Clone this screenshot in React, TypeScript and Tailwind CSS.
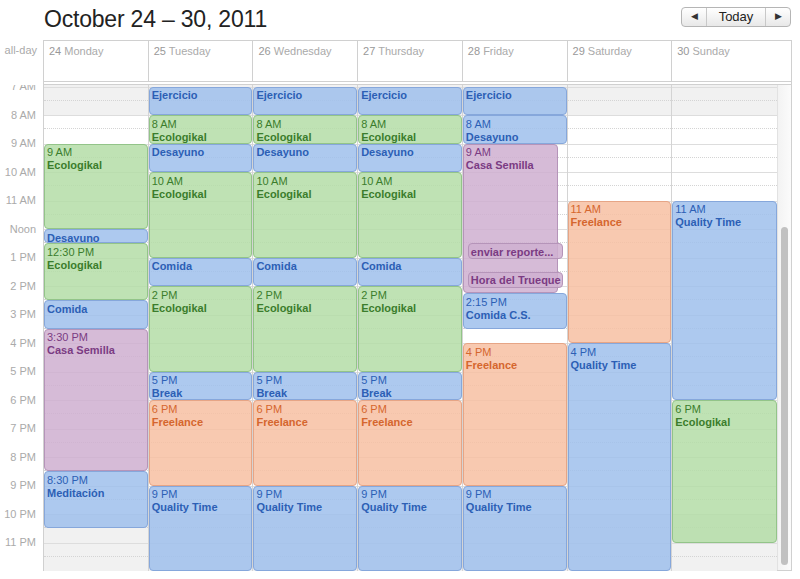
type Color = "blue" | "green" | "purple" | "orange";

type Ev = {
  s: number;
  e: number;
  c: Color;
  time?: string;
  title: string;
  pos?: string;
  h?: number;
};

const H = 28.5;
const OFFSET = 1.5;

const palette: Record<Color, string> = {
  blue: "bg-[rgba(160,192,236,0.86)] border-[#86a7db] text-[#2c5fb5]",
  green: "bg-[rgba(180,221,168,0.86)] border-[#93c489] text-[#3b7d2c]",
  purple: "bg-[rgba(207,176,208,0.86)] border-[#b594b9] text-[#7b3b83]",
  orange: "bg-[rgba(247,192,163,0.86)] border-[#e6a586] text-[#d5662e]",
};

const midWeek: Ev[] = [
  { s: 7, e: 8, c: "blue", title: "Ejercicio" },
  { s: 8, e: 9, c: "green", time: "8 AM", title: "Ecologikal" },
  { s: 9, e: 10, c: "blue", title: "Desayuno" },
  { s: 10, e: 13, c: "green", time: "10 AM", title: "Ecologikal" },
  { s: 13, e: 14, c: "blue", title: "Comida" },
  { s: 14, e: 17, c: "green", time: "2 PM", title: "Ecologikal" },
  { s: 17, e: 18, c: "blue", time: "5 PM", title: "Break" },
  { s: 18, e: 21, c: "orange", time: "6 PM", title: "Freelance" },
  { s: 21, e: 24, c: "blue", time: "9 PM", title: "Quality Time" },
];

const days: { num: string; name: string; events: Ev[] }[] = [
  {
    num: "24",
    name: "Monday",
    events: [
      { s: 9, e: 12, c: "green", time: "9 AM", title: "Ecologikal" },
      { s: 12, e: 12.5, c: "blue", title: "Desayuno" },
      { s: 12.5, e: 14.5, c: "green", time: "12:30 PM", title: "Ecologikal" },
      { s: 14.5, e: 15.5, c: "blue", title: "Comida" },
      { s: 15.5, e: 20.5, c: "purple", time: "3:30 PM", title: "Casa Semilla" },
      { s: 20.5, e: 22.5, c: "blue", time: "8:30 PM", title: "Meditación" },
    ],
  },
  { num: "25", name: "Tuesday", events: midWeek },
  { num: "26", name: "Wednesday", events: midWeek },
  { num: "27", name: "Thursday", events: midWeek },
  {
    num: "28",
    name: "Friday",
    events: [
      { s: 7, e: 8, c: "blue", title: "Ejercicio" },
      { s: 8, e: 9, c: "blue", time: "8 AM", title: "Desayuno" },
      { s: 9, e: 14.25, c: "purple", time: "9 AM", title: "Casa Semilla", pos: "left-0 right-[9px]" },
      { s: 12.5, e: 13, c: "purple", title: "enviar reporte...", pos: "left-[5px] right-[4px]", h: 16 },
      { s: 13.5, e: 14, c: "purple", title: "Hora del Trueque", pos: "left-[5px] right-[4px]", h: 16 },
      { s: 14.25, e: 15.5, c: "blue", time: "2:15 PM", title: "Comida C.S." },
      { s: 16, e: 21, c: "orange", time: "4 PM", title: "Freelance" },
      { s: 21, e: 24, c: "blue", time: "9 PM", title: "Quality Time" },
    ],
  },
  {
    num: "29",
    name: "Saturday",
    events: [
      { s: 11, e: 16, c: "orange", time: "11 AM", title: "Freelance" },
      { s: 16, e: 24, c: "blue", time: "4 PM", title: "Quality Time" },
    ],
  },
  {
    num: "30",
    name: "Sunday",
    events: [
      { s: 11, e: 18, c: "blue", time: "11 AM", title: "Quality Time" },
      { s: 18, e: 23, c: "green", time: "6 PM", title: "Ecologikal" },
    ],
  },
];

const hours = [7, 8, 9, 10, 11, 12, 13, 14, 15, 16, 17, 18, 19, 20, 21, 22, 23];

const hourLabel = (h: number) => {
  if (h === 12) return "Noon";
  return h < 12 ? `${h} AM` : `${h - 12} PM`;
};

const Event = ({ ev }: { ev: Ev }) => (
  <div
    className={`absolute ${ev.pos ?? "left-0 right-0"} overflow-hidden whitespace-nowrap rounded-[4px] border px-[2px] pt-[1.5px] text-[11px] leading-[13px] ${palette[ev.c]}`}
    style={{ top: OFFSET + (ev.s - 7) * H, height: ev.h ?? (ev.e - ev.s) * H }}
  >
    {ev.time && <div>{ev.time}</div>}
    <div className="font-bold">{ev.title}</div>
  </div>
);

export default function App() {
  return (
    <div className="relative h-[579px] w-[800px] overflow-hidden bg-white font-['Liberation_Sans',Arial,sans-serif]">
      {/* Toolbar */}
      <div className="flex h-[40px] items-start justify-between pl-[44px] pr-[9px]">
        <h1 className="mt-[7.5px] text-[23px] leading-[23px] tracking-[-0.2px] text-[#222]">
          October 24 – 30, 2011
        </h1>
        <div className="mt-[7px] flex h-[20px] rounded-[4px] border border-[#b5b5b5] bg-linear-to-b from-white to-[#e8e8e8] text-[13px] text-[#222]">
          <span className="flex w-[25px] items-center justify-center border-r border-[#c8c8c8] text-[9px] text-[#333]">◀</span>
          <span className="flex w-[59px] items-center justify-center border-r border-[#c8c8c8]">Today</span>
          <span className="flex w-[24px] items-center justify-center text-[9px] text-[#333]">▶</span>
        </div>
      </div>

      {/* All-day header */}
      <div className="flex">
        <div className="w-[43px] pr-[6px] pt-[3px] text-right text-[11px] leading-[14px] text-[#aaa]">all-day</div>
        <div className="grid h-[42px] w-[749px] grid-cols-[repeat(6,104.714px)_1fr] border border-[#d0d0d0]">
          {days.map((d, i) => (
            <div
              key={d.num}
              className={`pl-[5px] pt-[3px] text-[11px] leading-[14px] ${i < 6 ? "border-r border-[#d0d0d0]" : ""}`}
            >
              <span className="text-[#999]">{d.num}</span> <span className="text-[#aaa]">{d.name}</span>
            </div>
          ))}
        </div>
      </div>
      <div className="ml-[43px] h-[3px] w-[749px] border-x border-b border-[#d0d0d0]" />

      {/* Time grid */}
      <div className="flex h-[486px] overflow-hidden">
        <div className="w-[43px]">
          <div className="-mt-[12.75px]">
            {hours.map((h) => (
              <div key={h} className="flex h-[28.5px] items-center justify-end pr-[7px] text-[11px] text-[#aaa]">
                {hourLabel(h)}
              </div>
            ))}
          </div>
        </div>
        <div className="flex w-[749px] border-x border-b border-[#d0d0d0]">
          <div className="grid w-[733px] grid-cols-7">
            {days.map((d, i) => (
              <div key={d.num} className={`relative ${i < 6 ? "border-r border-[#d4d4d4]" : ""}`}>
                <div className="h-[1.5px] bg-[#f1f1f1]" />
                {hours.map((h) => (
                  <div
                    key={h}
                    className={`h-[28.5px] border-t border-[#dddddd] ${h < 8 || h >= 22 ? "bg-[#f1f1f1]" : ""}`}
                  >
                    <div className="h-[13.25px] border-b border-dotted border-[#d4d4d4]" />
                  </div>
                ))}
                {d.events.map((ev, k) => (
                  <Event key={k} ev={ev} />
                ))}
              </div>
            ))}
          </div>
          {/* Scrollbar */}
          <div className="flex-1 border-l border-[#e2e2e2] bg-linear-to-r from-[#f3f3f3] to-[#fbfbfb]">
            <div className="mx-auto mt-[142px] h-[338px] w-[7px] rounded-full bg-[#c1c1c1]" />
          </div>
        </div>
      </div>
    </div>
  );
}
